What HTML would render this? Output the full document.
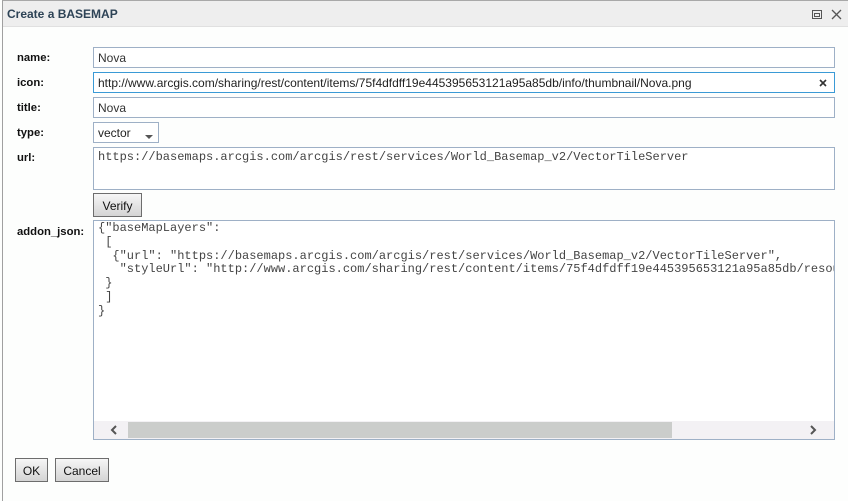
<!DOCTYPE html>
<html><head><style>
*{box-sizing:border-box;margin:0;padding:0}
body{width:848px;height:501px;background:#fdfefd;font-family:"Liberation Sans",sans-serif;position:relative;overflow:hidden}
.dlg{position:absolute;left:2px;top:0;width:848px;height:501px;border-left:1px solid #a0a0a0;border-top:1px solid #a8a8a8}
.tb{position:absolute;left:0;top:0;right:0;height:26px;background:#eeeeee;border-bottom:1px solid #e0e0e0}
.tt{position:absolute;left:4px;top:6px;font-size:12px;font-weight:bold;color:#2d4356}
.lbl{position:absolute;left:17px;font-size:11.3px;font-weight:bold;color:#111}
.in{position:absolute;left:93px;width:742px;height:21px;border:1px solid #9eb0c6;background:#fff;font-size:12px;color:#333;padding:3px 0 0 4px;white-space:nowrap;overflow:hidden}
.mono{font-family:"Liberation Mono",monospace;font-size:12px;color:#444;line-height:13.8px;white-space:pre}
.btn{position:absolute;height:24px;border:1px solid #6d6d6d;background:linear-gradient(#f6f6f6,#d4d4d4);font-size:12px;color:#111;text-align:center;padding-top:5px}
</style></head><body>
<div class="dlg">
<div class="tb"><div class="tt">Create a BASEMAP</div>
<svg style="position:absolute;left:809px;top:9px" width="10" height="9"><rect x="0.5" y="0.5" width="9" height="8" fill="none" stroke="#555"/><rect x="2.5" y="3.5" width="5" height="3" fill="none" stroke="#555"/></svg>
<svg style="position:absolute;left:828px;top:8px" width="11" height="11"><path d="M1 1L10 10M10 1L1 10" stroke="#555" stroke-width="1.3"/></svg>
</div></div>
<div class="lbl" style="top:52px">name:</div>
<div class="lbl" style="top:77px">icon:</div>
<div class="lbl" style="top:102px">title:</div>
<div class="lbl" style="top:127px">type:</div>
<div class="lbl" style="top:152px">url:</div>
<div class="lbl" style="top:226px">addon_json:</div>
<div class="in" style="top:47px">Nova</div>
<div class="in" style="top:72px;border-color:#3a9ad6;color:#222">http://www.arcgis.com/sharing/rest/content/items/75f4dfdff19e445395653121a95a85db/info/thumbnail/Nova.png
<svg style="position:absolute;right:7px;top:6px" width="8" height="8"><path d="M1 1L7 7M7 1L1 7" stroke="#333" stroke-width="1.6"/></svg></div>
<div class="in" style="top:97px">Nova</div>
<div class="in" style="top:122px;width:66px;color:#222">vector<svg style="position:absolute;left:51px;top:12px" width="8" height="4"><path d="M0 0H8L4 4Z" fill="#555"/></svg></div>
<div class="in mono" style="top:147px;height:43px;padding:3px 0 0 4px">https://basemaps.arcgis.com/arcgis/rest/services/World_Basemap_v2/VectorTileServer</div>
<div class="btn" style="left:93px;top:193px;width:49px">Verify</div>
<div class="in mono" style="top:220px;height:220px;padding:1px 0 0 4px">{"baseMapLayers":
 [
  {"url": "https://basemaps.arcgis.com/arcgis/rest/services/World_Basemap_v2/VectorTileServer",
   "styleUrl": "http://www.arcgis.com/sharing/rest/content/items/75f4dfdff19e445395653121a95a85db/resources/styles/root.json"
 }
 ]
}
<div style="position:absolute;left:0;right:0;bottom:0;height:18px;background:#f3f1f4"></div>
<div style="position:absolute;left:34px;width:544px;bottom:1px;height:16px;background:#cbcdcb"></div>
<svg style="position:absolute;left:16px;bottom:4px" width="8" height="10"><path d="M6 1L2 5L6 9" stroke="#555" stroke-width="2" fill="none"/></svg>
<svg style="position:absolute;left:715px;bottom:4px" width="8" height="10"><path d="M2 1L6 5L2 9" stroke="#555" stroke-width="2" fill="none"/></svg>
</div>
<div class="btn" style="left:15px;top:458px;width:33px">OK</div>
<div class="btn" style="left:55px;top:458px;width:54px">Cancel</div>
</body></html>
